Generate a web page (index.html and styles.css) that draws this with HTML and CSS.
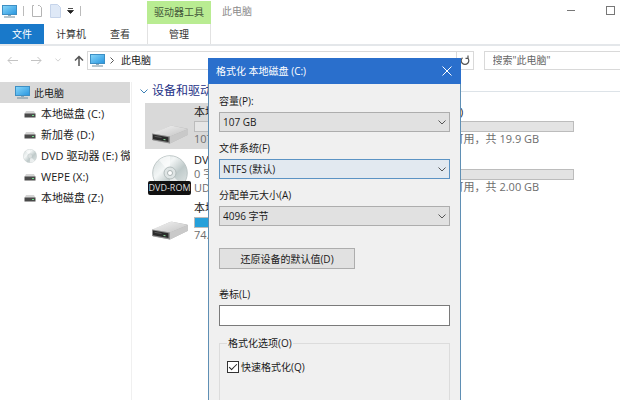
FILE: index.html
```html
<!DOCTYPE html>
<html lang="zh-CN">
<head>
    <meta charset="UTF-8">
    <meta name="viewport" content="width=device-width, initial-scale=1.0">
    <title>此电脑</title>
    <link rel="stylesheet" href="styles.css">
</head>
<body>
<!-- shared icons -->
<svg class="sprite" width="0" height="0" aria-hidden="true">
    <defs>
        <linearGradient id="screen" x1="0" y1="0" x2="1" y2="1">
            <stop offset="0" stop-color="#8ad8fa"/>
            <stop offset="1" stop-color="#2795df"/>
        </linearGradient>
        <linearGradient id="metal" x1="0" y1="0" x2="1" y2="1">
            <stop offset="0" stop-color="#f4f4f4"/>
            <stop offset="1" stop-color="#c3c3c3"/>
        </linearGradient>
        <linearGradient id="disc" x1="0" y1="0" x2="1" y2="1">
            <stop offset="0" stop-color="#cfd8d8"/>
            <stop offset=".35" stop-color="#f3f6f6"/>
            <stop offset=".6" stop-color="#bfcaca"/>
            <stop offset="1" stop-color="#e6eaea"/>
        </linearGradient>
    </defs>
    <symbol id="pc" viewBox="0 0 15 13">
        <rect x=".5" y=".5" width="14" height="9" fill="url(#screen)" stroke="#3d8fc4"/>
        <path d="M6 10h3v1H6z" fill="#8fa9b8"/>
        <path d="M2 12h11" stroke="#6f8c9c"/>
    </symbol>
    <symbol id="mini-drive" viewBox="0 0 12 8">
        <path d="M2 1h8l1.500 3H.5z" fill="#d4d4d4"/>
        <rect x=".5" y="3.500" width="11" height="4" fill="#4a4a4a"/>
        <rect x="8" y="5" width="2" height="1" fill="#6fdd8b"/>
    </symbol>
    <symbol id="drive" viewBox="0 0 38 20">
        <path d="M1 9L19 1q1-.5 2-.3L36 3.500q1 .3 1 1.300v5L19 18.500l-17-3z" fill="#b5b5b5"/>
        <path d="M1 8.500L19 1q1-.5 2-.3L37 4 19 11.500z" fill="url(#metal)"/>
        <path d="M19 11.500L37 4v5.800L19 18.500z" fill="#c9c9c9"/>
        <path d="M1 8.500l18 3v7L1 15z" fill="#8d8d8d"/>
        <path d="M2 9.500l15.500 2.700v4.800L2 14.200z" fill="#2b2b2b"/>
        <path d="M12.500 14l2 .3v1l-2-.3z" fill="#8fe39f"/>
        <path d="M3.500 11.300l7 1.200" stroke="#6b6b6b" stroke-width=".7"/>
    </symbol>
    <symbol id="cd" viewBox="0 0 36 36">
        <circle cx="18" cy="18" r="17.300" fill="url(#disc)" stroke="#b3bcbc" stroke-width=".8"/>
        <path d="M18 18L7 5q5-4 11-4zM18 18l12 12q-5 5-12 5z" fill="#fff" opacity=".6"/>
        <circle cx="18" cy="18" r="6" fill="#dfe5e5" stroke="#aab4b4" stroke-width=".8"/>
        <circle cx="18" cy="18" r="2.500" fill="#fff" stroke="#9aa5a5" stroke-width=".8"/>
    </symbol>
    <symbol id="chevron" viewBox="0 0 8 5">
        <path d="M.5 .5L4 4 7.500 .5" fill="none" stroke="currentColor"/>
    </symbol>
</svg>

<div class="explorer">
    <header class="ribbon">
        <div class="ribbon-left">
            <div class="quick-access">
                <svg width="15" height="13"><use href="#pc"/></svg>
                <span class="separator"></span>
                <svg class="qa-page" width="10" height="12" viewBox="0 0 10 12"><path d="M2 .5H.5v11h9V2.500L7.500 .5H6" fill="none" stroke="#b4b4b4"/></svg>
                <svg class="qa-page" width="11" height="14" viewBox="0 0 11 14"><path d="M.5 .5h7l3 3v10H.5z" fill="#dfe9f7" stroke="#c6d4ea"/></svg>
                <svg width="7" height="6" viewBox="0 0 7 6"><path d="M1 .5h5M.5 2.500h6L3.500 5.500z" stroke="#222" stroke-width=".8" fill="#222"/></svg>
                <span class="separator"></span>
            </div>
            <nav class="tabs">
                <button class="tab tab-file">文件</button>
                <button class="tab">计算机</button>
                <button class="tab">查看</button>
            </nav>
        </div>
        <div class="context-tab">
            <span class="context-title">驱动器工具</span>
            <button class="tab tab-manage">管理</button>
        </div>
        <h1 class="window-title">此电脑</h1>
        <div class="window-buttons">
            <button class="icon-btn" aria-label="最小化"><svg width="9" height="9" viewBox="0 0 9 9"><path d="M0 4.500h8" stroke="#777"/></svg></button>
            <button class="icon-btn" aria-label="最大化"><svg width="9" height="9" viewBox="0 0 9 9"><rect x=".5" y=".5" width="8" height="8" fill="none" stroke="#777"/></svg></button>
        </div>
    </header>

    <div class="address-row">
        <div class="nav-buttons">
            <button class="icon-btn" aria-label="后退"><svg width="11" height="9" viewBox="0 0 11 9"><path d="M11 4.500H1M4.500 1L1 4.500 4.500 8" fill="none" stroke="#c3c3c3"/></svg></button>
            <button class="icon-btn" aria-label="前进"><svg width="11" height="9" viewBox="0 0 11 9"><path d="M0 4.500h10M6.500 1L10 4.500 6.500 8" fill="none" stroke="#c3c3c3"/></svg></button>
            <button class="icon-btn history" aria-label="最近位置"><svg width="6" height="4"><use href="#chevron"/></svg></button>
            <button class="icon-btn" aria-label="上移"><svg width="10" height="11" viewBox="0 0 10 11"><path d="M5 11V1.500M1 5.500l4-4 4 4" fill="none" stroke="#555" stroke-width="1.500"/></svg></button>
        </div>
        <div class="address">
            <svg width="15" height="13"><use href="#pc"/></svg>
            <svg class="crumb" width="4" height="7" viewBox="0 0 4 7"><path d="M.5 .5l3 3-3 3" fill="none" stroke="#555"/></svg>
            <span class="address-text">此电脑</span>
            <button class="icon-btn refresh" aria-label="刷新"><svg width="10" height="11" viewBox="0 0 10 11"><path d="M7.500 2.800A3.800 3.800 0 1 1 2.500 2.800M5.500 3.300h2.500V.5" fill="none" stroke="#555" stroke-width="1.200"/></svg></button>
        </div>
        <input class="search" type="text" aria-label="搜索" placeholder='搜索"此电脑"'>
    </div>

    <div class="content">
        <nav class="sidebar">
            <a class="place place-root" href="#"><svg width="15" height="13"><use href="#pc"/></svg>此电脑</a>
            <a class="place" href="#"><svg width="12" height="8"><use href="#mini-drive"/></svg>本地磁盘 (C:)</a>
            <a class="place" href="#"><svg width="12" height="8"><use href="#mini-drive"/></svg>新加卷 (D:)</a>
            <a class="place place-dvd" href="#"><svg width="14" height="14"><use href="#cd"/></svg>DVD 驱动器 (E:) 微</a>
            <a class="place" href="#"><svg width="12" height="8"><use href="#mini-drive"/></svg>WEPE (X:)</a>
            <a class="place" href="#"><svg width="12" height="8"><use href="#mini-drive"/></svg>本地磁盘 (Z:)</a>
        </nav>

        <main class="files">
            <h2 class="group-title"><svg width="8" height="5"><use href="#chevron"/></svg>设备和驱动器</h2>
            <div class="drives">
                <div class="drive drive-selected">
                    <div class="drive-icon"><svg width="38" height="20"><use href="#drive"/></svg></div>
                    <div class="drive-info">
                        <p class="drive-name">本地磁盘 (C:)</p>
                        <div class="bar"></div>
                        <p>107 GB 可用</p>
                    </div>
                </div>
                <div class="drive">
                    <div class="drive-icon"></div>
                    <div class="drive-info">
                        <p class="drive-name">新加卷 (D:)</p>
                        <div class="bar bar-grey"></div>
                        <p>19.8 GB 可用，共 19.9 GB</p>
                    </div>
                </div>
                <div class="drive">
                    <div class="drive-icon dvd">
                        <svg width="36" height="36"><use href="#cd"/></svg>
                        <span class="dvd-label">DVD-ROM</span>
                    </div>
                    <div class="drive-info">
                        <p class="drive-name">DVD 驱动器</p>
                        <p>0 字节</p>
                        <p>UDF</p>
                    </div>
                </div>
                <div class="drive">
                    <div class="drive-icon"></div>
                    <div class="drive-info">
                        <p class="drive-name">WEPE</p>
                        <div class="bar bar-grey"></div>
                        <p>1.99 GB 可用，共 2.00 GB</p>
                    </div>
                </div>
                <div class="drive">
                    <div class="drive-icon"><svg width="38" height="20"><use href="#drive"/></svg></div>
                    <div class="drive-info">
                        <p class="drive-name">本地磁盘 (Z:)</p>
                        <div class="bar"><div class="bar-fill" style="width: 60%"></div></div>
                        <p>74.5 GB 可用</p>
                    </div>
                </div>
            </div>
        </main>
    </div>
</div>

<form class="dialog" role="dialog" aria-labelledby="dialog-title">
    <div class="dialog-header">
        <h2 class="dialog-title" id="dialog-title">格式化 本地磁盘 (C:)</h2>
        <button class="icon-btn" type="button" aria-label="关闭"><svg width="10" height="10" viewBox="0 0 10 10"><path d="M.5 .5l9 9M9.500 .5l-9 9" stroke="#fff"/></svg></button>
    </div>
    <div class="dialog-body">
        <div class="field">
            <label for="capacity">容量(P):</label>
            <div class="select-wrap">
                <select id="capacity"><option>107 GB</option></select>
                <svg class="arrow" width="8" height="5"><use href="#chevron"/></svg>
            </div>
        </div>
        <div class="field">
            <label for="filesystem">文件系统(F)</label>
            <div class="select-wrap">
                <select class="active" id="filesystem"><option>NTFS (默认)</option></select>
                <svg class="arrow" width="8" height="5"><use href="#chevron"/></svg>
            </div>
        </div>
        <div class="field">
            <label for="unit">分配单元大小(A)</label>
            <div class="select-wrap">
                <select id="unit"><option>4096 字节</option></select>
                <svg class="arrow" width="8" height="5"><use href="#chevron"/></svg>
            </div>
        </div>
        <button class="restore" type="button">还原设备的默认值(D)</button>
        <div class="field">
            <label for="volume">卷标(L)</label>
            <input class="volume" type="text" id="volume">
        </div>
        <fieldset class="options">
            <legend>格式化选项(O)</legend>
            <label class="check" for="quick"><input type="checkbox" id="quick" checked>快速格式化(Q)</label>
        </fieldset>
    </div>
</form>
</body>
</html>
```
FILE: styles.css
```css
*, *::before, *::after{
    box-sizing: border-box;
    padding: 0;
    margin: 0;
}

body{
    position: relative;
    min-height: 100vh;
    overflow: hidden;
    background-color: #fff;
    color: #1a1a1a;
    font-family: "Open Sans", "Noto Sans CJK SC", sans-serif;
    font-size: 10px;
    line-height: 14px;
}

button, input, select{
    font: inherit;
    color: inherit;
    border-radius: 0;
}

svg{
    display: block;
    flex-shrink: 0;
}

.sprite{
    position: absolute;
}

.icon-btn{
    display: flex;
    background: none;
    border: none;
}

/* ribbon */
.ribbon{
    display: flex;
    height: 46px;
    border-bottom: 2px solid #e4e7ea;
}

.ribbon-left{
    width: 147px;
}

.quick-access{
    display: flex;
    align-items: center;
    gap: 6px;
    height: 24px;
    padding: 0 2px 2px;
}

.separator{
    width: 1px;
    height: 10px;
    background-color: #bbb;
}

.qa-page{
    margin-left: 2px;
}

.tabs{
    display: flex;
    height: 20px;
}

.tab{
    height: 20px;
    padding: 0 12px;
    background: none;
    border: none;
    color: #333;
}

.tab-file{
    width: 44px;
    background-color: #1979ca;
    color: #fff;
}

.context-tab{
    display: flex;
    flex-direction: column;
    width: 64px;
    padding-top: 1px;
}

.context-title{
    height: 23px;
    line-height: 23px;
    background-color: #b9ec92;
    color: #44583a;
    text-align: center;
}

.tab-manage{
    border-left: 1px solid #e2e2e2;
    border-right: 1px solid #e2e2e2;
}

.window-title{
    padding: 4px 11px;
    color: #8c8c8c;
    font-size: 10px;
    font-weight: normal;
}

.window-buttons{
    display: flex;
    gap: 30px;
    margin-left: auto;
    padding: 6px 5px;
}

/* address bar */
.address-row{
    display: flex;
    align-items: center;
    height: 28px;
}

.nav-buttons{
    display: flex;
    align-items: center;
    gap: 13px;
    width: 87px;
    padding-left: 7px;
}

.history{
    color: #c3c3c3;
}

.address{
    display: flex;
    flex: 1;
    align-items: center;
    height: 19px;
    padding-left: 2px;
    border: 1px solid #d9d9d9;
}

.crumb{
    margin: 0 7px 0 5px;
}

.address-text{
    flex: 1;
}

.refresh{
    align-items: center;
    height: 17px;
    padding: 0 3px;
    border-left: 1px solid #d9d9d9;
}

.search{
    width: 22%;
    height: 19px;
    margin-left: 10px;
    padding: 0 8px;
    border: 1px solid #d9d9d9;
    border-right: none;
}

.search::placeholder{
    color: #666;
    opacity: 1;
}

/* content */
.content{
    display: flex;
    padding-top: 8px;
}

.sidebar{
    width: 131px;
    padding-right: 1px;
    font-size: 11px;
}

.place{
    display: flex;
    align-items: center;
    gap: 5px;
    height: 21px;
    padding-left: 24px;
    overflow: hidden;
    color: #1a1a1a;
    text-decoration: none;
    white-space: nowrap;
}

.place-root{
    gap: 4px;
    padding-left: 15px;
    background-color: #d9d9d9;
    font-size: 10px;
}

.place-dvd{
    gap: 4px;
    padding-left: 23px;
}

.files{
    flex: 1;
    min-width: 0;
    min-height: 318px;
    padding-left: 8px;
    border-left: 1px solid #f0f0f0;
}

.group-title{
    display: flex;
    align-items: center;
    gap: 4px;
    height: 18px;
    color: #1e3287;
    font-size: 12px;
    font-weight: normal;
}

.group-title::after{
    content: '';
    flex: 1;
    height: 1px;
    background-color: #dde3e8;
}

.group-title svg{
    color: #3b7fb5;
}

.drives{
    display: grid;
    grid-template-columns: 216px 216px;
    gap: 2px 0;
    margin: 3px 0 0 5px;
}

.drive{
    display: flex;
    height: 46px;
    padding-top: 2px;
    white-space: nowrap;
}

.drive-selected{
    background-color: #d9d9d9;
}

.drive-icon{
    display: flex;
    flex-direction: column;
    justify-content: flex-end;
    align-items: center;
    width: 49px;
    padding-bottom: 4px;
}

.dvd{
    justify-content: flex-start;
    padding: 2px 0 0;
}

.dvd-label{
    margin-top: -10px;
    padding: 0 1px;
    z-index: 1;
    background-color: #111;
    border-radius: 2px;
    color: #ddd;
    font-size: 9px;
    line-height: 14px;
}

.drive-info{
    width: 164px;
    color: #6d6d6d;
    font-size: 11px;
}

.drive-name{
    color: #1a1a1a;
}

.bar{
    height: 11px;
    margin: 2px 0 0;
    background-color: #e6e6e6;
    border: 1px solid #bcbcbc;
}

.bar-grey{
    background-color: #e3e3e3;
}

.bar-fill{
    height: 100%;
    background-color: #26a0da;
}

/* format dialog */
.dialog{
    position: absolute;
    top: 58px;
    bottom: 0;
    left: 208px;
    display: flex;
    flex-direction: column;
    width: 253px;
    background-color: #f0f0f0;
    border: 1px solid #5f8fb4;
    border-width: 0 1px;
}

.dialog-header{
    display: flex;
    align-items: center;
    justify-content: space-between;
    height: 26px;
    margin: 0 -1px;
    padding: 0 9px 0 8px;
    background-color: #2a6fcc;
    color: #fff;
}

.dialog-title{
    font-size: 10px;
    font-weight: normal;
}

.dialog-body{
    display: flex;
    flex: 1;
    flex-direction: column;
    gap: 7px;
    padding: 9px 10px 0;
}

.field{
    display: flex;
    flex-direction: column;
    gap: 3px;
    line-height: 16px;
}

.select-wrap{
    position: relative;
}

select{
    display: block;
    width: 100%;
    height: 20px;
    padding: 0 3px;
    appearance: none;
    background-color: #e1e1e1;
    border: 1px solid #adadad;
}

.field + .field{
    margin-top: 1px;
}

.active{
    background-color: #e2e9f0;
    border-color: #5b93c4;
}

.arrow{
    position: absolute;
    top: 8px;
    right: 4px;
    color: #555;
    pointer-events: none;
}

.restore{
    align-self: flex-start;
    width: 136px;
    height: 21px;
    margin: 15px 0 10px;
    background-color: #e1e1e1;
    border: 1px solid #adadad;
}

.volume{
    height: 21px;
    padding: 0 4px;
    background-color: #fff;
    border: 1px solid #7a7a7a;
}

.options{
    flex: 1;
    margin-top: 2px;
    padding: 8px 7px 0;
    border: 1px solid #dcdcdc;
    border-bottom: none;
    line-height: 16px;
}

.options legend{
    padding: 0 1px;
}

.check{
    display: flex;
    align-items: center;
    gap: 2px;
}

.check input{
    display: grid;
    place-content: center;
    width: 12px;
    height: 12px;
    appearance: none;
    background-color: #fff;
    border: 1px solid #333;
}

.check input:checked::before{
    content: '';
    width: 8px;
    height: 4px;
    margin-bottom: 2px;
    border: solid #222;
    border-width: 0 0 1px 1px;
    transform: rotate(-45deg);
}
```
